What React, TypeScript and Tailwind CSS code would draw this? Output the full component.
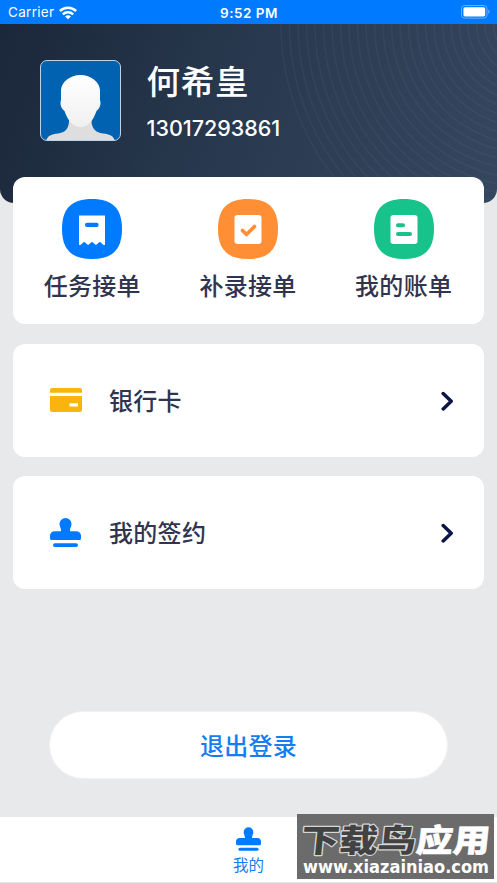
import React from "react";

const RINGS = Array.from({ length: 29 }, (_, i) => 10 + i * 8.5);

function WifiIcon() {
  return (
    <svg width="18" height="14" viewBox="0 0 18 14" fill="none" stroke="#fff" strokeWidth="2.5">
      <path d="M.9 5C5.500.6 12.500.6 17.100 5" />
      <path d="M3.800 8.300c2.900-2.800 7.500-2.800 10.400 0" />
      <path d="M9 13.200 6.100 10.400c1.600-1.500 4.200-1.500 5.800 0z" fill="#fff" stroke="none" />
    </svg>
  );
}

function BatteryIcon() {
  return (
    <svg width="29" height="14" viewBox="0 0 29 14">
      <rect x="0.5" y="0.5" width="25.5" height="12.6" rx="3.2" fill="none" stroke="#fff" strokeOpacity="0.4" />
      <rect x="2.4" y="2.2" width="21.8" height="9.2" rx="1.6" fill="#fff" />
      <path d="M27.3 4.800c1.600.6 1.600 3.400 0 4z" fill="#fff" fillOpacity="0.5" />
    </svg>
  );
}

function StampIcon({ className }: { className?: string }) {
  return (
    <svg className={className} viewBox="0 0 31 29" fill="#007aff">
      <path d="M15.500 0a6 6 0 0 1 6 6c0 2.600-1.500 3.800-1.500 6v1.200h6.300a4.700 4.700 0 0 1 4.700 4.700v2.600a1.600 1.600 0 0 1-1.600 1.600H1.600A1.600 1.600 0 0 1 0 20.500v-2.600a4.700 4.700 0 0 1 4.700-4.700H11V12c0-2.200-1.500-3.400-1.500-6a6 6 0 0 1 6-6z" />
      <rect x="3" y="25.200" width="25" height="3.800" rx="1.900" />
    </svg>
  );
}

function CardIcon({ className }: { className?: string }) {
  return (
    <svg className={className} viewBox="0 0 32 24" fill="#f9b50b">
      <path d="M2.200 0h27.600A2.200 2.200 0 0 1 32 2.200v2.600H0V2.200A2.200 2.200 0 0 1 2.200 0z" />
      <path
        fillRule="evenodd"
        d="M0 8h32v13.800a2.200 2.200 0 0 1-2.200 2.200H2.200A2.200 2.200 0 0 1 0 21.800zM19.500 15.200v3.300H28v-3.300z"
      />
    </svg>
  );
}

// rounded "squircle" tile behind the shortcut glyphs
function Tile({ color, children }: { color: string; children: React.ReactNode }) {
  return (
    <svg width="60" height="60" viewBox="0 0 60 60">
      <path fill={color} d="M30 0C50 0 60 9 60 30S50 60 30 60 0 51 0 30 10 0 30 0z" />
      {children}
    </svg>
  );
}

const shortcuts = [
  {
    label: "任务接单",
    icon: (
      <Tile color="#007aff">
        <path d="M17 16.500h26v29.500h-1.500l-3.600-3.300-4 3.300-3.900-3.300-3.900 3.300-4-3.300-3.600 3.300H17z" fill="#fff" />
        <rect x="23" y="23.8" width="13.6" height="4.2" rx="2" fill="#007aff" />
      </Tile>
    ),
  },
  {
    label: "补录接单",
    icon: (
      <Tile color="#ff8e35">
        <rect x="16.5" y="16" width="27" height="29" rx="3" fill="#fff" />
        <path
          d="m24.500 31.500 4 4 8-8"
          fill="none"
          stroke="#ff8e35"
          strokeWidth="3.6"
          strokeLinecap="round"
          strokeLinejoin="round"
        />
      </Tile>
    ),
  },
  {
    label: "我的账单",
    icon: (
      <Tile color="#18c38b">
        <rect x="16.5" y="16" width="27" height="29" rx="3" fill="#fff" />
        <rect x="22" y="24.3" width="9" height="4" rx="2" fill="#18c38b" />
        <rect x="22" y="33" width="16" height="4" rx="2" fill="#18c38b" />
      </Tile>
    ),
  },
];

const rows = [
  { label: "银行卡", icon: <CardIcon className="w-8 h-6 -mt-px" /> },
  { label: "我的签约", icon: <StampIcon className="w-[31px] h-[29px] -mt-px" /> },
];

function Avatar() {
  return (
    <div className="w-[81px] h-[81px] rounded-[7px] overflow-hidden border border-[#b9d3ea] bg-[#0162b1]">
      <svg width="79" height="79" viewBox="0 0 79 79">
        <defs>
          <linearGradient id="face" x1="0" y1="0" x2="0" y2="1">
            <stop offset="0" stopColor="#fff" />
            <stop offset="1" stopColor="#f0f0f0" />
          </linearGradient>
        </defs>
        <path
          d="M28 51v9c0 7-4 12-11 12.500C10 73 6 75.500 5 80h69c-1-4.500-5-7-12-7.500-7-.5-11.500-5.500-11.500-12.500v-9z"
          fill="#dedede"
        />
        <path
          d="M39.500 14C50 14 58.500 21 59 29v10c1.500 4-.5 9-3.500 11C52 60 47 66 39.500 66S27 60 23.500 50c-3-2-5-7-3.500-11V29c.5-8 9-15 19.500-15z"
          fill="url(#face)"
        />
      </svg>
    </div>
  );
}

function Watermark() {
  return (
    <div className="absolute right-[3px] bottom-[4px] w-[197px] h-[65px] bg-[#6b6b6b]">
      <svg className="overflow-visible" width="197" height="65" viewBox="0 0 197 65">
        <g
          fontFamily="'Noto Sans CJK SC', sans-serif"
          fontWeight="900"
          fontSize="32"
          strokeLinejoin="round"
          transform="translate(3 37.500) skewX(-6)"
        >
          <text x="0" y="0" textLength="115" lengthAdjust="spacingAndGlyphs" fill="#424242" stroke="#d6d6d6" strokeWidth="2.4" paintOrder="stroke">
            下载鸟
          </text>
          <text x="115" y="0" textLength="74" lengthAdjust="spacingAndGlyphs" fill="#fff" stroke="#fff" strokeWidth="0.5">
            应用
          </text>
        </g>
        <text
          x="6"
          y="59"
          textLength="186"
          lengthAdjust="spacingAndGlyphs"
          fontFamily="'DejaVu Sans', sans-serif"
          fontWeight="700"
          fontSize="17"
          fill="#fff"
        >
          www.xiazainiao.com
        </text>
      </svg>
    </div>
  );
}

export default function App() {
  return (
    <div className="relative flex flex-col w-[497px] h-[883px] overflow-hidden bg-[#e8e9eb] font-['Inter','Noto_Sans_CJK_SC',sans-serif] text-[#30344f]">
      <div className="grid grid-cols-3 items-center h-6 shrink-0 pl-[8px] pr-[7px] bg-[#007aff] text-white text-[13.5px]">
        <div className="flex items-center gap-[5px] pt-px">
          <span className="tracking-[0.3px]">Carrier</span>
          <WifiIcon />
        </div>
        <span className="pt-[2px] text-center font-semibold tracking-[0.5px]">9:52 PM</span>
        <div className="flex justify-end">
          <BatteryIcon />
        </div>
      </div>

      <header className="relative h-[179px] shrink-0 rounded-b-[14px] overflow-hidden bg-linear-[110deg,#1b273a,#293a50_50%,#35475f]">
        <svg className="absolute inset-0" width="497" height="179" viewBox="0 0 497 179">
          <g fill="none" stroke="#fff" strokeOpacity="0.04" strokeWidth="1.5">
            {RINGS.map((r) => (
              <circle key={r} cx="529" cy="0" r={r} />
            ))}
          </g>
        </svg>
        <div className="relative flex gap-[25.5px] pl-10 pt-[36px] text-white">
          <Avatar />
          <div className="flex flex-col">
            <h1 className="text-[33.5px] leading-[44px] font-medium tracking-[0.8px]">何希皇</h1>
            <p className="mt-[11px] text-[21.5px] leading-[26px] font-medium">13017293861</p>
          </div>
        </div>
      </header>

      <main className="relative flex flex-col -mt-[26px] px-[13px]">
        <section className="grid grid-cols-3 h-[147px] w-[471px] pt-[21.5px] pl-[1.5px] pr-[2.5px] rounded-[12px] bg-white">
          {shortcuts.map((item) => (
            <div key={item.label} className="flex flex-col items-center">
              {item.icon}
              <span className="mt-[10.5px] text-[24px] leading-[36px] font-medium tracking-[0.3px]">{item.label}</span>
            </div>
          ))}
        </section>

        <div className="flex flex-col gap-[19px] mt-5">
          {rows.map((row) => (
            <div key={row.label} className="flex items-center h-[113px] w-[471px] pl-[37px] pr-[30px] rounded-[12px] bg-white">
              <div className="flex w-[59px] shrink-0">{row.icon}</div>
              <span className="flex-1 pt-[2px] text-[24px] leading-[36px] font-medium tracking-[0.3px]">{row.label}</span>
              <svg width="13" height="20" viewBox="0 0 13 20" fill="none" stroke="#0b1548" strokeWidth="3.5" strokeLinecap="round" strokeLinejoin="round">
                <path d="m2.200 2.500 8 7.700-8 7.700" />
              </svg>
            </div>
          ))}
        </div>

        <button className="mt-[122px] mx-auto w-[399px] h-[68px] pt-[3px] rounded-full border border-[#f1f1f2] bg-white text-[#157df2] text-[24px] font-medium tracking-[0.3px]">
          退出登录
        </button>
      </main>

      <nav className="flex flex-col items-center mt-auto h-[66px] shrink-0 pt-[10px] border-b border-[#e4e4e6] bg-white text-[#157df2]">
        <StampIcon className="w-[25px] h-[24px]" />
        <span className="mt-[4px] text-[15.5px] leading-[22px]">我的</span>
      </nav>

      <Watermark />
    </div>
  );
}
